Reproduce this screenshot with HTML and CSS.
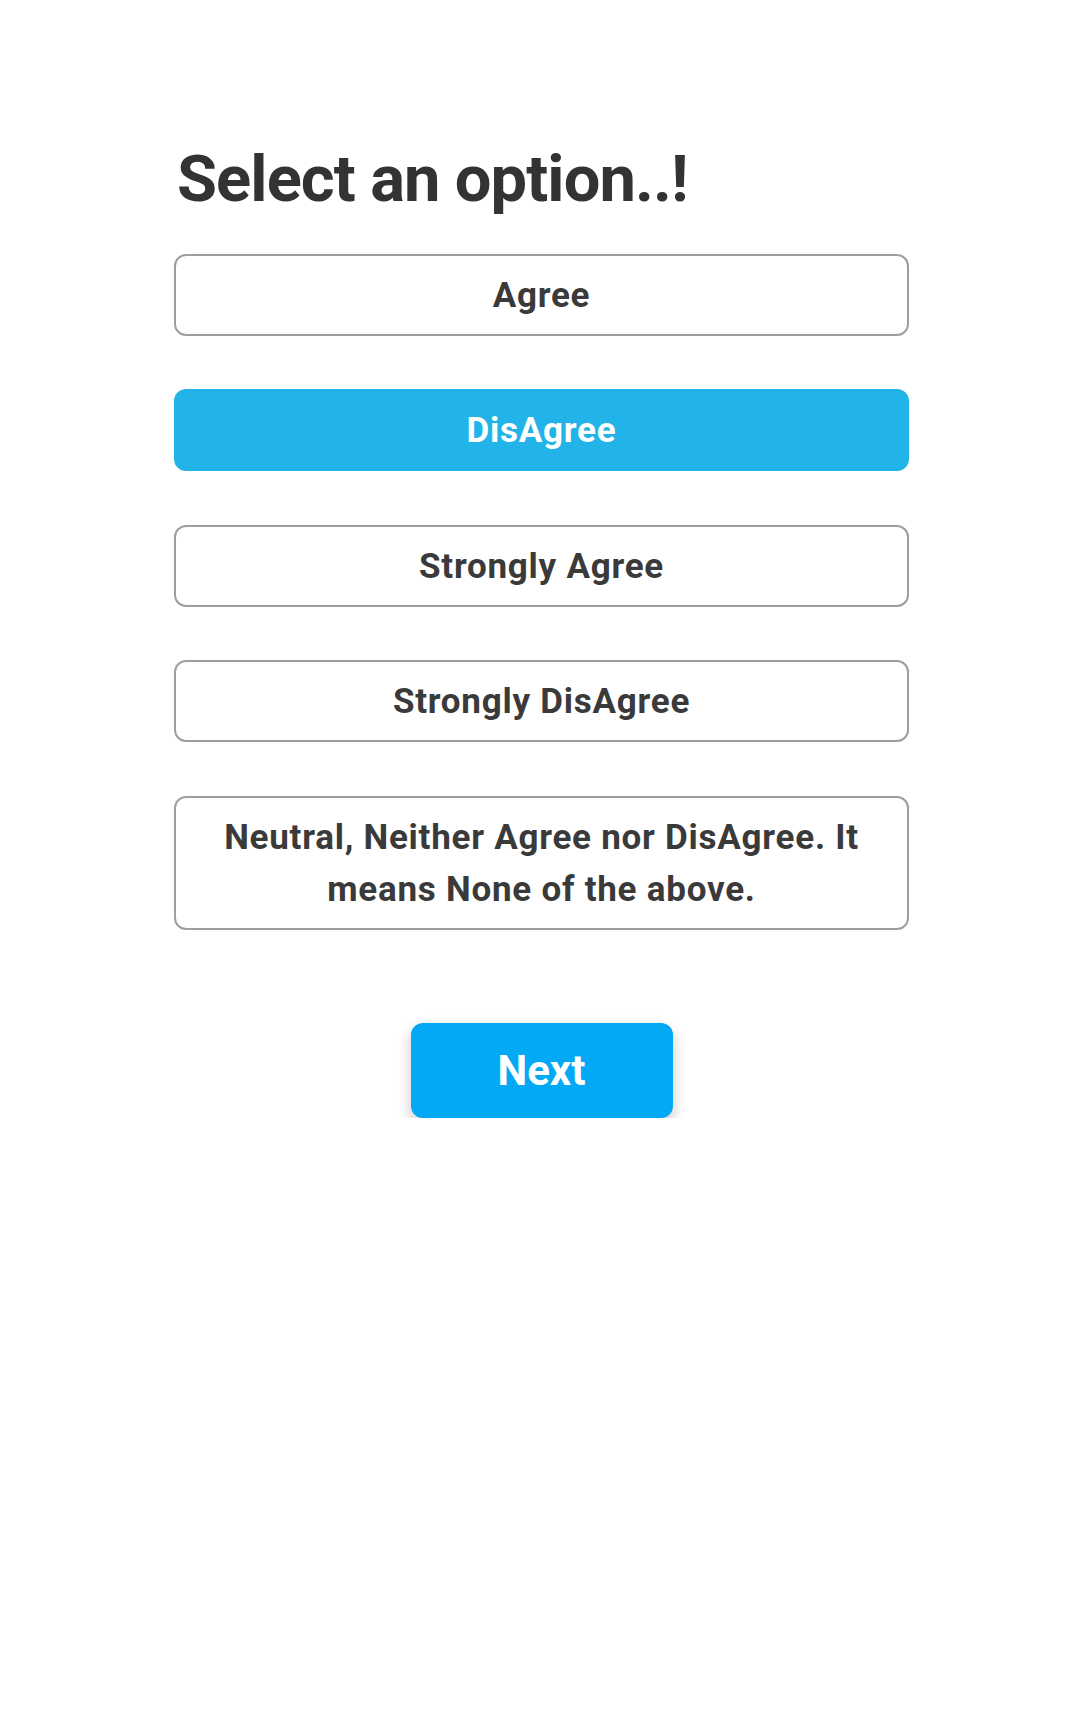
FILE: index.html
```html
<!DOCTYPE html>
<html>
<head>
<meta charset="utf-8">
<link rel="stylesheet" href="styles.css">
</head>
<body>
<main class="page">
  <h1 class="title">Select an option..!</h1>
  <div class="options">
    <div class="option">Agree</div>
    <div class="option selected">DisAgree</div>
    <div class="option">Strongly Agree</div>
    <div class="option">Strongly DisAgree</div>
    <div class="option">Neutral, Neither Agree nor DisAgree. It means None of the above.</div>
  </div>
  <div class="actions">
    <button class="next">Next</button>
  </div>
</main>
</body>
</html>
```
FILE: styles.css
```css
html, body {
  margin: 0;
  padding: 0;
  background: #ffffff;
}
.page {
  font-family: Roboto, "Liberation Sans", sans-serif;
  color: #333333;
  padding-top: 141px;
  margin-left: 174px;
  width: 735px;
}
.title {
  margin: 0 0 36px 3px;
  font-size: 65px;
  line-height: 77px;
  font-weight: 700;
  letter-spacing: -0.9px;
  color: #333333;
}
.options {
  display: flex;
  flex-direction: column;
  gap: 53.4px;
}
.option {
  box-sizing: border-box;
  border: 2px solid #9e9e9e;
  border-radius: 12px;
  padding: 14px 40px 12px;
  min-height: 82px;
  text-align: center;
  font-size: 35px;
  line-height: 52px;
  font-weight: 700;
  letter-spacing: 0.75px;
  color: #3a3a3a;
}
.option.selected {
  background: #22b4e8;
  border-color: #22b4e8;
  color: #ffffff;
}
.actions {
  display: flex;
  justify-content: center;
  margin-top: 93px;
}
.next {
  width: 262px;
  height: 95px;
  border: none;
  border-radius: 12px;
  background: #03a9f4;
  color: #ffffff;
  font-family: Roboto, "Liberation Sans", sans-serif;
  font-size: 42px;
  font-weight: 700;
  box-shadow: 0 6px 14px rgba(0, 0, 0, 0.22);
  padding: 0;
}
```
